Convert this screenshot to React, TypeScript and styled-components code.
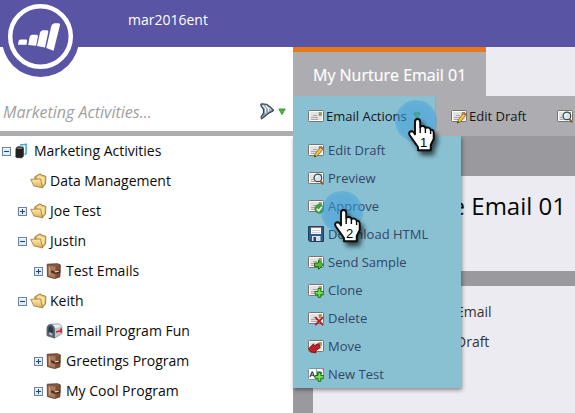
import React from "react";
import styled, { createGlobalStyle } from "styled-components";

const Global = createGlobalStyle`
  * { box-sizing: border-box; }
  body { margin: 0; overflow: hidden; font-family: "Open Sans", "Noto Sans", sans-serif; }
`;
const Page = styled.div`
  position: relative; width: 575px; height: 413px; overflow: hidden;
  display: flex; flex-direction: column; background: #fff; color: #0b0b0b;
`;
const Header = styled.header`
  position: relative; height: 47px; flex: none; background: #5a54a4;
  padding: 10px 0 0 128px; color: #fff; font-size: 14px; line-height: 20px;
`;
const Logo = styled.svg`position: absolute; left: 0; top: 0; z-index: 2;`;
const Body = styled.div`display: flex; flex: 1;`;
const Sidebar = styled.aside`width: 293px; flex: none; display: flex; flex-direction: column;`;
const SearchBar = styled.div`
  height: 89px; flex: none; display: flex; align-items: flex-end; gap: 3px;
  border-bottom: 5px solid #adacb1; padding: 0 7px 7px 3px;
`;
const SearchHint = styled.span`flex: 1; font-size: 16px; line-height: 24px; font-style: italic; color: #a0a0a0;`;
const FilterTools = styled.div`display: flex; align-items: center; gap: 3px; padding-bottom: 4px;`;
const Tree = styled.div`display: flex; flex-direction: column;`;
const TreeRow = styled.div<{ $level: number }>`
  height: 30px; display: flex; align-items: center; font-size: 14px; white-space: nowrap;
  padding-left: ${(p) => 2 + p.$level * 16}px;
`;
const Toggle = styled.span`width: 9px; margin-right: 3px; display: flex; flex: none;`;
const TreeIcon = styled.span`width: 20px; display: flex; flex: none;`;
const Label = styled.span`line-height: 20px;`;
const Main = styled.main`
  position: relative; flex: 1; min-width: 0; display: flex; flex-direction: column; background: #ecebf1;
`;
const Tab = styled.div`
  width: 193px; height: 49px; flex: none; background: #adacb1; border-top: 5px solid #e97818;
  color: #fff; font-size: 16px; line-height: 24px; padding: 11px 0 0 20px; white-space: nowrap;
  -webkit-text-stroke: 0.2px #fff;
`;
const Toolbar = styled.div`height: 40px; flex: none; display: flex; background: #adacb1; overflow: hidden;`;
const ToolItem = styled.div<{ $active?: boolean; $width: number }>`
  width: ${(p) => p.$width}px; flex: none; display: flex; align-items: center; gap: 2px; padding-left: 15px;
  font-size: 13px; white-space: nowrap; color: #161616;
  background: ${(p) => (p.$active ? "#89c1d3" : "transparent")};
  border-right: ${(p) => (p.$active ? "1px solid #a1a5ad" : "0")};
`;
const ToolLabel = styled.span`line-height: 20px;`;
const Arrow = styled.svg`margin-left: 4px;`;
const Canvas = styled.div`
  flex: 1; background: #9a999e; padding: 40px 0 0 20px; display: flex; flex-direction: column; gap: 15px;
`;
const TitlePanel = styled.div`
  height: 95px; flex: none; background: #ecebf1; padding: 13px 9px 0 0; text-align: right;
  font-size: 24px; line-height: 34px; color: #050505; white-space: nowrap;
`;
const DetailPanel = styled.div`flex: 1; background: #ecebf1; padding: 11px 0 0 143px;`;
const Detail = styled.div`height: 30px; line-height: 30px; font-size: 14px; color: #333;`;
const Menu = styled.div`
  position: absolute; left: 0; top: 89px; width: 168px; height: 252px; background: #89c1d3;
  box-shadow: 1px 2px 4px rgba(0, 0, 0, 0.42); clip-path: inset(0 -8px -8px -8px);
`;
const MenuItem = styled.div`
  height: 28px; display: flex; align-items: center; gap: 4px; padding-left: 15px;
  font-size: 13px; color: #334668; white-space: nowrap;
`;
const Pointer = styled.svg<{ $x: number; $y: number }>`
  position: absolute; left: ${(p) => p.$x}px; top: ${(p) => p.$y}px; z-index: 5;
`;

type Badge = "pencil" | "lens" | "check" | "send" | "plus" | "cross" | "tag";

function BadgeArt({ kind }: { kind: Badge }) {
  switch (kind) {
    case "pencil":
      return <g><path d="M7.2 11.8 13.2 4.5l2.3 2-6.2 7.4-2.9 1z" fill="#f4c63d" stroke="#806016" strokeWidth=".8" /><path d="m12 5.8 1.2-1.4 2.4 2-1.2 1.4z" fill="#b56565" /><path d="m6 15.3.8-2.2 1.5 1.5z" fill="#333" /></g>;
    case "lens":
      return <g><path d="m12.3 10.8 3 3.6" stroke="#8d5b25" strokeWidth="2" /><circle cx="9.9" cy="7.9" r="3.8" fill="#d4e5ec" stroke="#3f464a" strokeWidth="1.2" /><path d="M7.9 8c.2-1.2.9-1.8 2-1.8" stroke="#fff" fill="none" /></g>;
    case "check":
      return <g><circle cx="11.3" cy="10.8" r="4.4" fill="#3ba43e" stroke="#288131" strokeWidth=".7" /><path d="m8.8 10.8 1.9 1.9 3.4-4" stroke="#fff" strokeWidth="1.6" fill="none" /></g>;
    case "send":
      return <path d="M6.5 9h4V6.2l5 4.6-5 4.6v-2.8h-4z" fill="#54bd35" stroke="#196c1d" />;
    case "plus":
      return <path d="M10 6.5h2.8v3h3v2.8h-3v3H10v-3H7V9.5h3z" fill="#76df49" stroke="#18751d" />;
    case "cross":
      return <path d="m7.2 7.2 8 8m0-8-8 8" stroke="#b51e22" strokeWidth="1.9" fill="none" />;
    case "tag":
      return <path d="m.8 10.5 4.7-4.7.7 2 4.4-2.3 1.6 4-4.6 3.4.4 2-5.5-.9z" fill="#bd2027" stroke="#811c21" />;
  }
}

function MailIcon({ badge }: { badge?: Badge }) {
  return (
    <svg width="16" height="16" viewBox="0 0 16 16">
      <rect x=".5" y="2.5" width="15" height="11" rx="1" fill="#e4e2e0" stroke="#77736f" />
      <path d="M1.5 3.5h13v9h-13z" fill="none" stroke="#fbfbfb" />
      <path d="M3 9.5h7M5 7.5h4M3 11.5h7" stroke="#9c9894" strokeWidth=".8" />
      <path d="M11 4.5h2.5v3H11z" fill="#a3a047" stroke="#79804d" strokeWidth=".5" />
      {badge && <BadgeArt kind={badge} />}
    </svg>
  );
}

function DiskIcon() {
  return (
    <svg width="16" height="16" viewBox="0 0 16 16">
      <path d="M.5.5h15v15H1.8L.5 14.2z" fill="#2f5d8b" stroke="#203e61" />
      <path d="M3 1h10v7H3z" fill="#f6f8fa" /><path d="M3 1.4h10" stroke="#a8534f" strokeWidth=".9" />
      <path d="M4 4.5h8M4 6.5h8" stroke="#c8d2db" /><path d="M4 10h8.5v5H4z" fill="#d9e1e8" /><path d="M5.5 11H8v4H5.5z" fill="#29445f" />
    </svg>
  );
}

function TestIcon() {
  return (
    <svg width="16" height="16" viewBox="0 0 16 16">
      <rect x=".5" y="2.5" width="15" height="11" rx="1" fill="#f9fafa" stroke="#82929b" />
      <path d="M8.5 3v10" stroke="#9aa4a9" />
      <path d="m2 11 2-5h.5l2 5M3 9.3h3M9.7 11V6H12c2 0 2 2.2 0 2.3H9.7" stroke="#263846" strokeWidth="1.1" fill="none" />
      <path d="M14 3h1.5v1.5" stroke="#eb493e" fill="none" /><BadgeArt kind="plus" />
    </svg>
  );
}

function FolderIcon() {
  return (
    <svg width="17" height="16" viewBox="0 0 17 16">
      <path d="M4.8 6V3.8L9.5 1l1.6.2.8 1.1 3.4.7.6.8-.4 7.2-2.8 3.2z" fill="#d8b15d" stroke="#927035" strokeWidth=".8" />
      <path d="m6.5 3.9 3.5-2 1.2 1.4 3.6.7-.4 6.6-1.8 1.8z" fill="#f8e096" />
      <path d="M.7 6.3 10.6 6l2 8.9-8.8-2z" fill="url(#folder)" stroke="#9d7738" strokeWidth=".8" strokeLinejoin="round" />
      <defs><linearGradient id="folder" x1="0" y1="0" x2="0" y2="1"><stop stopColor="#ffebab" /><stop offset="1" stopColor="#dcae55" /></linearGradient></defs>
    </svg>
  );
}

function ProgramIcon() {
  return (
    <svg width="16" height="16" viewBox="0 0 16 16">
      <path d="M1.2 1.2 11.5.7l2.9 1.2-.5 12-5.2 1.7-7.2-2z" fill="#7d4f37" stroke="#573a2b" strokeWidth=".8" />
      <path d="m2 2.6 7.6.9-.5 11.4-6.8-1.8z" fill="#a87a5b" /><path d="m2 2.1 9.5-.6 2.2.8-3.5.8z" fill="#8a5e44" />
      <path d="M3.6 4.2v7.6" stroke="#cba383" strokeWidth="1.2" />
      <path d="m5 7.2 3.5 1 5.8-.9v2.6l-5.2 1.2L5 9.4z" fill="#4f2e21" /><path d="m8.5 8 4.4-.3v1.1l-3.6.7z" fill="#ecc5a2" />
    </svg>
  );
}

function MailboxIcon() {
  return (
    <svg width="17" height="16" viewBox="0 0 17 16">
      <path d="M4.2 1.3 11 .8c3.2 0 4.9 1.6 5 4.2v5.8l-7.5 4.3z" fill="#bcc8d2" stroke="#7c8994" strokeWidth=".7" />
      <path d="M5 2.1 11.4 1.5c1.8 0 3 .6 3.8 2L9 5.2C8.2 3.2 6.8 2.2 5 2.1z" fill="#e8eef2" />
      <path d="M1 12.6V6C1 3 2.3 1.6 4.2 1.6c2.8 0 4.3 2.2 4.3 5.4v8.1z" fill="#5b6872" stroke="#55626c" strokeWidth=".9" />
      <path d="M2.3 11.6V6.4c0-2.3.7-3.4 2-3.4 2 0 2.9 1.9 2.9 4.3v6z" fill="#2f3c46" />
      <path d="m2.8 9 3.8 1.3v2.6l-3.8-1.5z" fill="#a9b6bf" />
      <path d="m10 8.3 4.2-1.2V5.3l1.8.3v4l-1.6.3-.2-1.2-4.2 1z" fill="#dd2528" />
    </svg>
  );
}

function RootIcon() {
  return (
    <svg width="14" height="16" viewBox="0 0 14 16">
      <path d="m6 1.9 6.1-.6v9.3l-1.6 1" fill="none" stroke="#3ea6da" strokeWidth="1.5" />
      <path d="m4 3.6 5.7-.4v9.3" fill="none" stroke="#d5dfe5" strokeWidth="1" />
      <path d="M2 5.2 4 3.7l5 .5.3.7v8.4l-1.4 1.5-5.4-.2-.6-.7z" fill="#1f2122" stroke="#1f2122" strokeWidth=".8" />
      <path d="m2.4 5.5 1.7-1 4.6.2-1.4 1.2z" fill="#8b8e90" />
    </svg>
  );
}

function ToggleIcon({ open }: { open: boolean }) {
  return (
    <svg width="9" height="9" viewBox="0 0 9 9">
      <rect x=".5" y=".5" width="8" height="8" fill="#dfebf6" stroke="#6d829e" />
      <path d="M1.5 1.5h6" stroke="#fff" /><path d={open ? "M2 4.5h5" : "M2 4.5h5M4.5 2v5"} stroke="#244468" />
    </svg>
  );
}

function FunnelIcon() {
  return (
    <svg width="15" height="17" viewBox="0 0 15 17">
      <path d="M.8 1.3 2 .8l4.6.5 3.6 2.6 3.4 3.3-1 1.1-4 2-3.4 2.9-3.8 2.7-.3-2.2 2.4-3.8V6.3L1 3z" fill="#8797a9" stroke="#2e4159" strokeWidth="1.1" strokeLinejoin="round" />
      <path d="m2.6 2.2 3 3.6v4.4" stroke="#eef3f7" strokeWidth="1.3" fill="none" />
      <path d="m5.8 2.4 2.7 3.4v2.6" stroke="#fff" strokeWidth="1.2" fill="none" />
      <path d="m9.2 4.6 1.6 2.8" stroke="#dfe7ee" />
    </svg>
  );
}

const TriangleMark = () => <path d="M.8 1h6.4L4 6.6z" fill="#55b63f" stroke="#2c8a29" strokeWidth=".8" />;

function HandPointer({ n, x, y, id }: { n: number; x: number; y: number; id: string }) {
  return (
    <Pointer $x={x} $y={y} width="70" height="70" viewBox="0 0 70 70">
      <defs>
        <radialGradient id={id}><stop stopColor="#3b9cdb" stopOpacity=".55" /><stop offset=".8" stopColor="#3b9cdb" stopOpacity=".52" /><stop offset="1" stopColor="#3b9cdb" stopOpacity=".4" /></radialGradient>
        <filter id={`${id}s`} x="-50%" y="-50%" width="200%" height="200%"><feDropShadow dx="3" dy="4" stdDeviation="2.5" floodColor="#000" floodOpacity=".65" /></filter>
      </defs>
      <circle cx="29.2" cy="30" r="21" fill={`url(#${id})`} />
      <path d="M28 31q0-3 2.6-3t2.6 3v5q.8-1.2 2.8-1 2 .2 2.5 2 .8-.7 2.8-.4 2 .4 2.3 2.2 3.1-.6 3.1 3.2v6l-3 6v5.2H31V56l-8.5-12q-1.2-3.5 2-3.7 2 0 3.5 3z" fill="#fff" stroke="#080808" strokeWidth="1.9" strokeLinejoin="round" filter={`url(#${id}s)`} />
      <path d="M33.2 36v6M38.4 37v5M43.6 39v4" stroke="#080808" strokeWidth="1.4" />
      <text x="36.5" y="55.5" textAnchor="middle" fontFamily="Liberation Sans, sans-serif" fontSize="13" fill="#000">{n}</text>
    </Pointer>
  );
}

const icons = { root: RootIcon, folder: FolderIcon, program: ProgramIcon, mailbox: MailboxIcon };
const tree: { text: string; level: number; icon: keyof typeof icons; open?: boolean }[] = [
  { text: "Marketing Activities", level: 0, icon: "root", open: true },
  { text: "Data Management", level: 1, icon: "folder" },
  { text: "Joe Test", level: 1, icon: "folder", open: false },
  { text: "Justin", level: 1, icon: "folder", open: true },
  { text: "Test Emails", level: 2, icon: "program", open: false },
  { text: "Keith", level: 1, icon: "folder", open: true },
  { text: "Email Program Fun", level: 2, icon: "mailbox" },
  { text: "Greetings Program", level: 2, icon: "program", open: false },
  { text: "My Cool Program", level: 2, icon: "program", open: false },
];
const menu = [
  { text: "Edit Draft", icon: <MailIcon badge="pencil" /> },
  { text: "Preview", icon: <MailIcon badge="lens" /> },
  { text: "Approve", icon: <MailIcon badge="check" /> },
  { text: "Download HTML", icon: <DiskIcon /> },
  { text: "Send Sample", icon: <MailIcon badge="send" /> },
  { text: "Clone", icon: <MailIcon badge="plus" /> },
  { text: "Delete", icon: <MailIcon badge="cross" /> },
  { text: "Move", icon: <MailIcon badge="tag" /> },
  { text: "New Test", icon: <TestIcon /> },
];

export default function App() {
  return (
    <Page>
      <Global />
      <Header>
        mar2016ent
        <Logo width="82" height="80" viewBox="0 0 82 80">
          <circle cx="40.5" cy="38.3" r="38.7" fill="#5a54a4" />
          <circle cx="40.5" cy="36.5" r="30.3" fill="none" stroke="#fff" strokeWidth="4.5" />
          <g fill="#fff">
            <path d="m18 44.8.6-3.8q.3-1.5 2-1.6h5.2q1.5 0 1.3 1.4l-.6 4z" />
            <path d="m28.2 45 1.4-8q.4-2 2.4-2.2h4.5q1.7 0 1.4 1.6l-1.8 9.3z" />
            <path d="m37 45.9 3-13.2q.5-2.3 3-2.4h4q1.7 0 1.3 1.7L45 47.5z" />
            <path d="m46.3 47.9 5-21.8q.6-2.6 3-2.9h4.4q1.7 0 1.3 1.8l-6.4 25.8z" />
          </g>
        </Logo>
      </Header>
      <Body>
        <Sidebar>
          <SearchBar>
            <SearchHint>Marketing Activities...</SearchHint>
            <FilterTools>
              <FunnelIcon />
              <svg width="8" height="8" viewBox="0 0 8 8"><TriangleMark /></svg>
            </FilterTools>
          </SearchBar>
          <Tree>
            {tree.map((row) => {
              const Icon = icons[row.icon];
              return (
                <TreeRow key={row.text} $level={row.level}>
                  <Toggle>{row.open !== undefined && <ToggleIcon open={row.open} />}</Toggle>
                  <TreeIcon><Icon /></TreeIcon>
                  <Label>{row.text}</Label>
                </TreeRow>
              );
            })}
          </Tree>
        </Sidebar>
        <Main>
          <Tab>My Nurture Email 01</Tab>
          <Toolbar>
            <ToolItem $active $width={143}>
              <MailIcon /><ToolLabel>Email Actions</ToolLabel>
              <Arrow width="8" height="8" viewBox="0 0 8 8"><TriangleMark /></Arrow>
            </ToolItem>
            <ToolItem $width={106}><MailIcon badge="pencil" /><ToolLabel>Edit Draft</ToolLabel></ToolItem>
            <ToolItem $width={100}><MailIcon badge="lens" /></ToolItem>
          </Toolbar>
          <Canvas>
            <TitlePanel>My Nurture Email 01</TitlePanel>
            <DetailPanel><Detail>Email</Detail><Detail>Draft</Detail></DetailPanel>
          </Canvas>
          <Menu>
            {menu.map((item) => <MenuItem key={item.text}>{item.icon}<Label>{item.text}</Label></MenuItem>)}
          </Menu>
        </Main>
      </Body>
      <HandPointer n={1} x={387} y={91} id="first" />
      <HandPointer n={2} x={313} y={182} id="second" />
    </Page>
  );
}
